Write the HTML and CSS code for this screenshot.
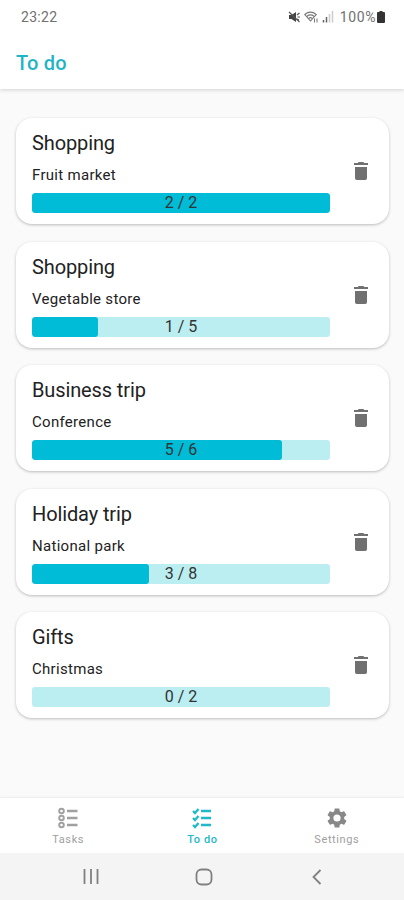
FILE: index.html
```html
<!DOCTYPE html>
<html lang="en">
<head>
    <meta charset="UTF-8">
    <meta name="viewport" content="width=device-width, initial-scale=1.0">
    <title>To do</title>
    <link rel="stylesheet" href="styles.css">
</head>
<body>
    <!-- Shared icons -->
    <svg class="icon-defs" width="0" height="0">
        <symbol id="icon-trash" viewBox="0 0 14 18">
            <path d="M1 5h12v11.200a1.800 1.800 0 0 1-1.800 1.800H2.800A1.800 1.800 0 0 1 1 16.200zM0 1h3.700l1-1h4.600l1 1H14v2H0z"/>
        </symbol>
    </svg>

    <div class="app">
        <header class="header">
            <div class="status-bar">
                <span class="clock">23:22</span>
                <div class="status-icons">
                    <svg class="mute" width="13" height="12" viewBox="0 0 13 12">
                        <path d="M1 4h2.500L8 1v10L3.500 8H1z" fill="#444"/>
                        <path d="M1 1l10.500 10M9 4l2.500-2M9.500 6H12M9 8l2 1" fill="none" stroke="#555" stroke-width="1.200"/>
                    </svg>
                    <svg class="wifi" width="15" height="12" viewBox="0 0 15 12">
                        <path d="M.8 3.500Q6.500-1.200 12.200 3.500L6.500 10zM3 5.200q3.500-2.600 7 0M4.800 7.200q1.700-1.200 3.400 0" fill="none" stroke="#777" stroke-width="1.100"/>
                        <path d="M10.500 7.500v4M13 7.500v4" stroke="#777"/>
                    </svg>
                    <svg class="signal" width="12" height="12" viewBox="0 0 12 12">
                        <path d="M1.500 9v2.500M4.500 6v5.500" stroke="#666" stroke-width="1.500"/>
                        <path d="M7.500 3v8.500M10.500 0v11.500" stroke="#ccc" stroke-width="1.500"/>
                    </svg>
                    <span class="percent">100%</span>
                    <svg class="battery" width="8" height="12" viewBox="0 0 8 12">
                        <path d="M2.500 0h3v1H7a1 1 0 0 1 1 1v9a1 1 0 0 1-1 1H1a1 1 0 0 1-1-1V2a1 1 0 0 1 1-1h1.500z" fill="#333"/>
                    </svg>
                </div>
            </div>
            <h1>To do</h1>
        </header>

        <main class="list">
            <div class="card">
                <div class="card-content">
                    <h2>Shopping</h2>
                    <p>Fruit market</p>
                    <div class="progress">
                        <div class="progress-fill" style="width: 100%"></div>
                        <span class="progress-text">2 / 2</span>
                    </div>
                </div>
                <button class="delete" aria-label="Delete"><svg><use href="#icon-trash"/></svg></button>
            </div>

            <div class="card">
                <div class="card-content">
                    <h2>Shopping</h2>
                    <p>Vegetable store</p>
                    <div class="progress">
                        <div class="progress-fill" style="width: 22.2%"></div>
                        <span class="progress-text">1 / 5</span>
                    </div>
                </div>
                <button class="delete" aria-label="Delete"><svg><use href="#icon-trash"/></svg></button>
            </div>

            <div class="card">
                <div class="card-content">
                    <h2>Business trip</h2>
                    <p>Conference</p>
                    <div class="progress">
                        <div class="progress-fill" style="width: 83.9%"></div>
                        <span class="progress-text">5 / 6</span>
                    </div>
                </div>
                <button class="delete" aria-label="Delete"><svg><use href="#icon-trash"/></svg></button>
            </div>

            <div class="card">
                <div class="card-content">
                    <h2>Holiday trip</h2>
                    <p>National park</p>
                    <div class="progress">
                        <div class="progress-fill" style="width: 39.2%"></div>
                        <span class="progress-text">3 / 8</span>
                    </div>
                </div>
                <button class="delete" aria-label="Delete"><svg><use href="#icon-trash"/></svg></button>
            </div>

            <div class="card">
                <div class="card-content">
                    <h2>Gifts</h2>
                    <p>Christmas</p>
                    <div class="progress">
                        <div class="progress-fill" style="width: 0%"></div>
                        <span class="progress-text">0 / 2</span>
                    </div>
                </div>
                <button class="delete" aria-label="Delete"><svg><use href="#icon-trash"/></svg></button>
            </div>
        </main>

        <!-- Bottom tabs -->
        <nav class="tabs">
            <a class="tab">
                <svg width="20" height="22" viewBox="0 0 20 22" fill="none" stroke="currentColor" stroke-width="1.900">
                    <circle cx="3.500" cy="4" r="2.300"/>
                    <circle cx="3.500" cy="11" r="2.300"/>
                    <circle cx="3.500" cy="18" r="2.300"/>
                    <path d="M9 4h10.500M9 11h10.500M9 18h10.500" stroke-width="2.300"/>
                </svg>
                <span>Tasks</span>
            </a>
            <a class="tab active">
                <svg width="20" height="22" viewBox="0 0 20 22" fill="none" stroke="currentColor" stroke-width="2.300">
                    <path d="M1 4l2 2 3.500-4M1 11l2 2 3.500-4M1 18l2 2 3.500-4M9 4h10M9 11h10M9 18h10"/>
                </svg>
                <span>To do</span>
            </a>
            <a class="tab">
                <svg width="24" height="24" viewBox="0 0 24 24" fill="currentColor">
                    <path d="M19.140 12.940c.04-.3.060-.61.060-.94 0-.32-.02-.64-.07-.94l2.030-1.580c.18-.14.230-.41.120-.61l-1.920-3.320c-.12-.22-.37-.29-.59-.22l-2.390.96c-.5-.38-1.030-.7-1.620-.94l-.36-2.540c-.04-.24-.24-.41-.48-.41h-3.840c-.24 0-.43.17-.47.41l-.36 2.540c-.59.24-1.130.57-1.620.94l-2.390-.96c-.22-.08-.47 0-.59.22L2.740 8.870c-.12.210-.08.470.12.610l2.030 1.580c-.05.3-.09.630-.09.940s.02.640.07.940l-2.030 1.580c-.18.140-.23.410-.12.610l1.920 3.320c.12.220.37.290.59.220l2.390-.96c.5.380 1.030.7 1.620.94l.36 2.540c.05.240.240.410.480.410h3.840c.24 0 .44-.17.47-.41l.36-2.540c.59-.24 1.130-.56 1.620-.94l2.390.96c.22.080.470 0 .59-.22l1.920-3.320c.12-.22.070-.47-.12-.61l-2.010-1.580zM12 15.600a3.600 3.600 0 1 1 0-7.200 3.600 3.600 0 0 1 0 7.200z"/>
                </svg>
                <span>Settings</span>
            </a>
        </nav>

        <!-- System navigation -->
        <div class="system-nav">
            <svg width="16" height="16" viewBox="0 0 16 16"><path d="M1.500 0v15M8 0v15M14.500 0v15"/></svg>
            <svg width="18" height="18" viewBox="0 0 18 18"><rect x="1.500" y="1.500" width="15" height="15" rx="5"/></svg>
            <svg width="16" height="16" viewBox="0 0 16 16"><path d="M11.500 1L4.500 8l7 7"/></svg>
        </div>
    </div>
</body>
</html>
```
FILE: styles.css
```css
* {
    box-sizing: border-box;
}

body {
    font-family: Roboto, 'Liberation Sans', sans-serif;
    margin: 0;
    background-color: #fafafa;
    color: #222;
}

h1, h2, p {
    margin: 0;
    font-weight: 400;
}

.icon-defs {
    display: none;
}

.app {
    display: flex;
    flex-direction: column;
    height: 900px;
}

.header {
    height: 89px;
    background-color: #fff;
    box-shadow: 0 1px 4px rgba(0, 0, 0, 0.16);
}

.status-bar {
    display: flex;
    justify-content: space-between;
    align-items: center;
    height: 34px;
    padding: 0 19px 0 21px;
    font-size: 14px;
    color: #707070;
}

.clock {
    letter-spacing: 0.3px;
}

.status-icons {
    display: flex;
    align-items: center;
}

.mute {
    margin-right: 3px;
}

.wifi {
    margin-right: 3px;
}

.signal {
    margin-right: 6px;
}

.percent {
    margin-right: 1px;
    letter-spacing: 0.6px;
}

h1 {
    padding: 16px 16px 0;
    font-size: 20px;
    line-height: 26px;
    font-weight: 500;
    letter-spacing: 0.2px;
    color: #1fb5c6;
}

.list {
    display: flex;
    flex-direction: column;
    flex: 1;
    gap: 17.5px;
    padding: 29px 15px 0 16px;
}

.card {
    display: flex;
    height: 106px;
    padding-left: 16px;
    background-color: #fff;
    border-radius: 16px;
    box-shadow: 0 1px 3px rgba(0, 0, 0, 0.25);
}

.card-content {
    width: 298px;
    padding-top: 13px;
}

.card h2 {
    font-size: 20px;
    line-height: 24px;
    letter-spacing: -0.12px;
}

.card p {
    margin-top: 10px;
    font-size: 15px;
    line-height: 20px;
    letter-spacing: 0.3px;
}

.progress {
    position: relative;
    height: 20px;
    margin-top: 8px;
    background-color: #bbeef1;
    border-radius: 3px;
    overflow: hidden;
}

.progress-fill {
    height: 100%;
    background-color: #00bcd6;
    border-radius: 3px;
}

.progress-text {
    position: absolute;
    inset: 0;
    font-size: 16px;
    line-height: 20px;
    text-align: center;
    color: #333;
}

.delete {
    display: flex;
    flex: 1;
    align-items: center;
    justify-content: center;
    padding: 0 0 0 3px;
    border: none;
    background: none;
    color: #707070;
}

.delete svg {
    width: 14px;
    height: 18px;
    fill: currentColor;
}

.tabs {
    display: grid;
    grid-template-columns: repeat(3, 1fr);
    height: 55px;
    padding-left: 1px;
    background-color: #fff;
    box-shadow: 0 -1px 2px rgba(0, 0, 0, 0.06);
}

.tab {
    display: flex;
    flex-direction: column;
    align-items: center;
    padding-top: 8px;
    font-size: 11px;
    letter-spacing: 0.6px;
    color: #a0a0a0;
}

.tab svg {
    height: 24px;
}

.tab span {
    line-height: 13px;
    margin-top: 3px;
}

.tab:last-child svg {
    color: #888;
}

.tab.active {
    color: #1fb9c8;
}

.tab.active span {
    font-weight: 500;
}

.system-nav {
    display: flex;
    justify-content: center;
    align-items: center;
    gap: 96px;
    height: 47px;
    padding-left: 3px;
    background-color: #f4f4f4;
}

.system-nav svg {
    fill: none;
    stroke: #808080;
    stroke-width: 1.8;
}
```
